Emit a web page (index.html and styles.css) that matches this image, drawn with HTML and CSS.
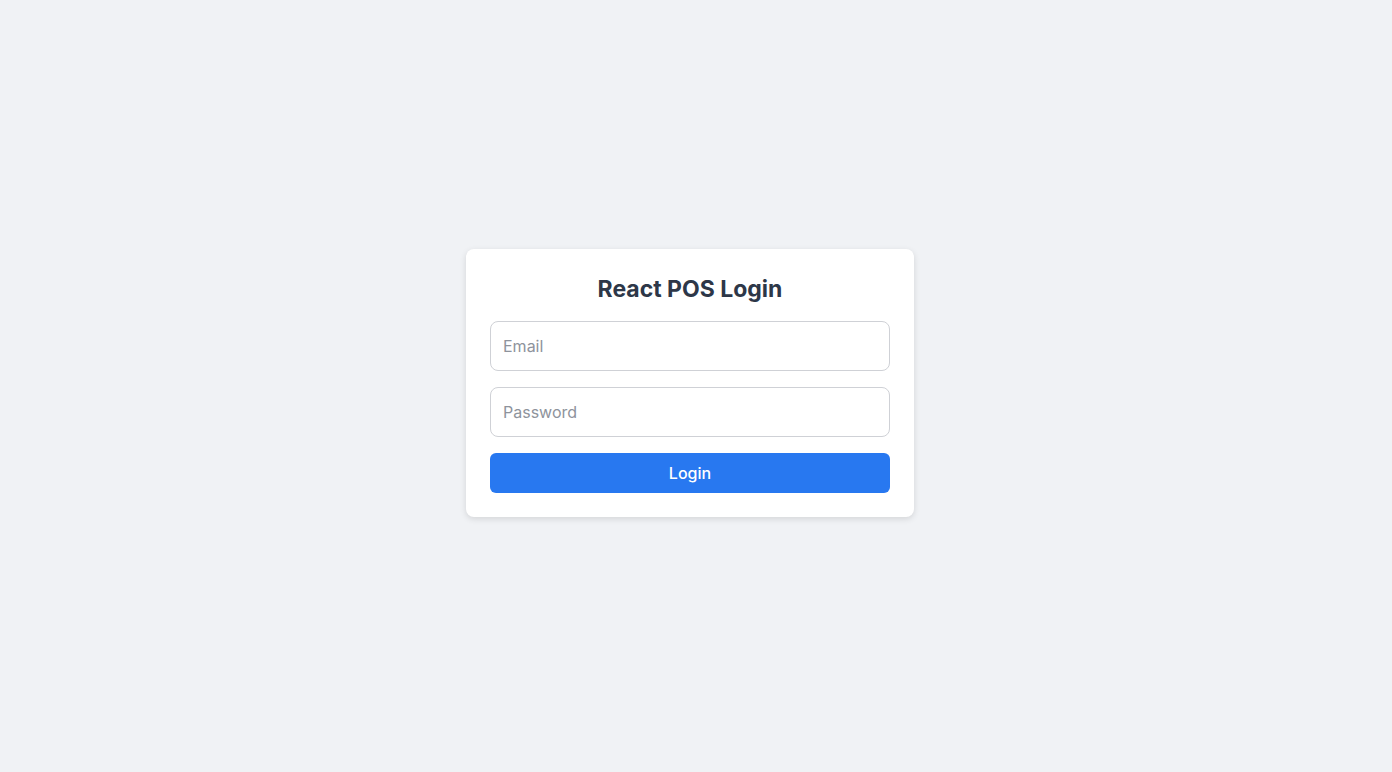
FILE: index.html
```html
<!DOCTYPE html>
<html>
<head>
<meta charset="utf-8">
<link rel="stylesheet" href="styles.css">
</head>
<body>
<div class="page">
  <form class="card">
    <h2 class="title">React POS Login</h2>
    <input class="field" type="email" placeholder="Email">
    <input class="field" type="password" placeholder="Password">
    <button class="btn" type="button">Login</button>
  </form>
</div>
</body>
</html>
```

FILE: styles.css
```css
* { box-sizing: border-box; }
html, body { margin: 0; height: 100%; }
body {
  background: #f0f2f5;
  font-family: Inter, "Noto Sans", "Liberation Sans", sans-serif;
}
.page {
  height: 772px;
  display: flex;
  align-items: center;
  justify-content: center;
  padding-bottom: 6px;
  padding-right: 12px;
}
.card {
  width: 448px;
  background: #fff;
  border-radius: 8px;
  box-shadow: 0 2px 6px rgba(0,0,0,0.12);
  padding: 24px;
  display: flex;
  flex-direction: column;
  gap: 16px;
}
.title {
  margin: 2px 0 2px;
  text-align: center;
  font-size: 23px;
  font-weight: 700;
  color: #2d3748;
  line-height: 28px;
}
.field {
  height: 50px;
  border: 1px solid #cfd1d6;
  border-radius: 8px;
  padding: 0 12px;
  font-family: inherit;
  font-size: 16px;
  color: #2d3748;
  outline: none;
}
.field::placeholder { color: #8e939c; }
.btn {
  height: 40px;
  border: none;
  border-radius: 6px;
  background: #2878f0;
  color: #fff;
  font-family: inherit;
  font-size: 16px;
  font-weight: 500;
}
```
